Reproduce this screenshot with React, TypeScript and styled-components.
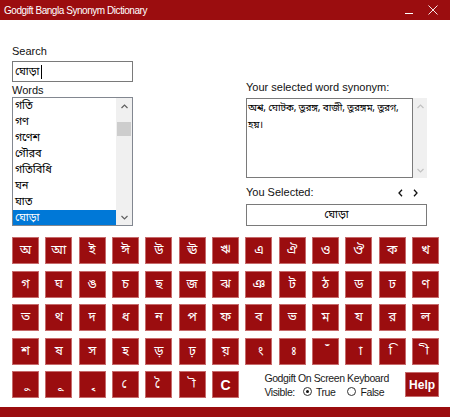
import styled, { createGlobalStyle } from "styled-components";

const RED = "#9b0d0f";
const BN = `"Noto Sans Bengali", "Noto Serif Bengali", "Lohit Bengali", "Vrinda", "FreeSerif", "FreeSans", sans-serif`;
const NBSP = "\u00a0";

const GlobalStyle = createGlobalStyle`
  html, body {
    margin: 0;
    padding: 0;
    background: #ffffff;
  }
  body {
    width: 450px;
    height: 417px;
    overflow: hidden;
    font-family: "Liberation Sans", Arial, sans-serif;
    color: #000;
  }
`;

const Window = styled.div`
  width: 450px;
  height: 417px;
  display: flex;
  flex-direction: column;
  background: #ffffff;
`;

const TitleBar = styled.div`
  height: 20px;
  flex-shrink: 0;
  background: ${RED};
  display: flex;
  align-items: center;
  padding-left: 4px;
  color: #ffffff;
`;

const Title = styled.span`
  font-size: 10px;
  letter-spacing: -0.45px;
  flex: 1;
`;

const WinControls = styled.div`
  display: flex;
  align-items: center;
  gap: 15px;
  padding-right: 12px;
`;

const Main = styled.div`
  flex: 1;
  display: flex;
  flex-direction: column;
  padding: 0 11px 0 12px;
`;

const TopArea = styled.div`
  height: 217px;
  display: flex;
  justify-content: space-between;
  padding-right: 12px;
`;

const LeftColumn = styled.div`
  width: 121px;
  display: flex;
  flex-direction: column;
  padding-top: 25px;
`;

const RightColumn = styled.div`
  width: 181px;
  display: flex;
  flex-direction: column;
  padding-top: 61px;
`;

const Label = styled.div<{ $top?: number }>`
  font-size: 11px;
  line-height: 13px;
  height: 13px;
  margin-top: ${(p) => p.$top ?? 0}px;
  white-space: nowrap;
  color: #111;
`;

const SearchBox = styled.div`
  margin-top: 3px;
  height: 21px;
  box-sizing: border-box;
  border: 1px solid #7a7a7a;
  display: flex;
  align-items: center;
  padding-left: 2px;
  font-family: ${BN};
  font-size: 11px;
`;

const Caret = styled.span`
  display: inline-block;
  width: 1px;
  height: 14px;
  background: #000;
  margin-left: 1px;
`;

const ListBox = styled.div`
  height: 129px;
  box-sizing: border-box;
  border: 1px solid #828790;
  display: flex;
  overflow: hidden;
`;

const ListItems = styled.div`
  flex: 1;
  display: flex;
  flex-direction: column;
`;

const ListItem = styled.div<{ $selected?: boolean }>`
  height: 16px;
  flex-shrink: 0;
  line-height: 16px;
  padding-left: 2px;
  font-family: ${BN};
  font-size: 11px;
  background: ${(p) => (p.$selected ? "#0078d7" : "transparent")};
  color: ${(p) => (p.$selected ? "#ffffff" : "#000000")};
`;

const ScrollBar = styled.div<{ $width: number; $disabled?: boolean }>`
  width: ${(p) => p.$width}px;
  flex-shrink: 0;
  background: #f0f0f0;
  display: flex;
  flex-direction: column;
  align-items: center;
  justify-content: space-between;
  color: ${(p) => (p.$disabled ? "#c2c2c2" : "#606060")};
`;

const ScrollArrow = styled.div`
  height: 16px;
  width: 100%;
  display: flex;
  align-items: center;
  justify-content: center;
`;

const ScrollTrack = styled.div`
  flex: 1;
  width: 100%;
  position: relative;
`;

const Thumb = styled.div`
  position: absolute;
  left: 1px;
  right: 1px;
  top: 8px;
  height: 14px;
  background: #cdcdcd;
`;

const SynonymWrap = styled.div`
  margin-top: 4px;
  height: 80px;
  display: flex;
`;

const SynonymText = styled.div`
  flex: 1;
  box-sizing: border-box;
  border: 1px solid #7a7a7a;
  padding: 1px 1px;
  font-family: ${BN};
  font-size: 10px;
  letter-spacing: -0.2px;
  line-height: 17px;
`;

const SelectedRow = styled.div`
  margin-top: 8px;
  display: flex;
  align-items: center;
  height: 13px;
`;

const NavArrows = styled.div`
  margin-left: auto;
  display: flex;
  gap: 10px;
  margin-right: 9px;
  color: #111;
`;

const SelectedBox = styled.div`
  margin-top: 5px;
  height: 22px;
  box-sizing: border-box;
  border: 1px solid #7a7a7a;
  display: flex;
  align-items: center;
  justify-content: center;
  font-family: ${BN};
  font-size: 11px;
`;

const Keyboard = styled.div`
  display: grid;
  grid-template-columns: repeat(13, 27px);
  grid-auto-rows: 27px;
  column-gap: 6.35px;
  row-gap: 6.5px;
`;

const Key = styled.button<{ $latin?: boolean }>`
  margin: 0;
  padding: 0;
  box-sizing: border-box;
  background: ${RED};
  border: 1px solid #c66a6b;
  color: #ffffff;
  font-family: ${(p) => (p.$latin ? `"Liberation Sans", Arial, sans-serif` : BN)};
  font-weight: ${(p) => (p.$latin ? "bold" : "normal")};
  font-size: ${(p) => (p.$latin ? "14px" : "13px")};
  display: flex;
  align-items: center;
  justify-content: center;
  cursor: pointer;
`;

const KeyboardFooter = styled.div`
  grid-column: 8 / -1;
  display: flex;
  align-items: center;
  padding-left: 19px;
`;

const FooterText = styled.div`
  flex: 1;
  display: flex;
  flex-direction: column;
  font-size: 10.5px;
  letter-spacing: -0.4px;
  line-height: 14px;
  color: #1a1a1a;
`;

const VisibleRow = styled.div`
  display: flex;
  align-items: center;
`;

const Radio = styled.span<{ $checked?: boolean }>`
  display: inline-block;
  width: 9px;
  height: 9px;
  box-sizing: border-box;
  border: 1px solid #333;
  border-radius: 50%;
  margin-left: ${(p) => (p.$checked ? 8 : 12)}px;
  margin-right: 4px;
  position: relative;
  &::after {
    content: "";
    display: ${(p) => (p.$checked ? "block" : "none")};
    position: absolute;
    left: 2px;
    top: 2px;
    width: 3px;
    height: 3px;
    border-radius: 50%;
    background: #111;
  }
`;

const HelpButton = styled.button`
  width: 34px;
  height: 25px;
  margin: 0;
  padding: 0;
  background: ${RED};
  border: 1px solid #c66a6b;
  color: #ffffff;
  font-family: "Liberation Sans", Arial, sans-serif;
  font-weight: bold;
  font-size: 12px;
  cursor: pointer;
`;

const BottomBar = styled.div`
  height: 10px;
  flex-shrink: 0;
  background: ${RED};
`;

// vowel signs and other marks get a no-break space as base so no dotted circle shows
const marks = ["ং", "ঃ", "ঁ", "া", "ি", "ী", "ু", "ূ", "ৃ", "ে", "ৈ", "ৗ"];

const rows = [
  ["অ", "আ", "ই", "ঈ", "উ", "ঊ", "ঋ", "এ", "ঐ", "ও", "ঔ", "ক", "খ"],
  ["গ", "ঘ", "ঙ", "চ", "ছ", "জ", "ঝ", "ঞ", "ট", "ঠ", "ড", "ঢ", "ণ"],
  ["ত", "থ", "দ", "ধ", "ন", "প", "ফ", "ব", "ভ", "ম", "য", "র", "ল"],
  ["শ", "ষ", "স", "হ", "ড়", "ঢ়", "য়", "ং", "ঃ", "ঁ", "া", "ি", "ী"],
  ["ু", "ূ", "ৃ", "ে", "ৈ", "ৗ"],
];

const words = ["গতি", "গণ", "গণেশ", "গৌরব", "গতিবিধি", "ঘন", "ঘাত", "ঘোড়া"];

function Chevron({ up }: { up?: boolean }) {
  return (
    <svg width="7" height="5" viewBox="0 0 7 5">
      <path
        d={up ? "M0.5 4 L3.5 1 L6.5 4" : "M0.5 1 L3.5 4 L6.5 1"}
        fill="none"
        stroke="currentColor"
        strokeWidth="1.2"
      />
    </svg>
  );
}

function NavArrow({ left }: { left?: boolean }) {
  return (
    <svg width="5" height="8" viewBox="0 0 5 8">
      <path
        d={left ? "M4 0.8 L1 4 L4 7.2" : "M1 0.8 L4 4 L1 7.2"}
        fill="none"
        stroke="currentColor"
        strokeWidth="1.3"
      />
    </svg>
  );
}

export default function App() {
  return (
    <>
      <GlobalStyle />
      <Window>
        <TitleBar>
          <Title>Godgift Bangla Synonym Dictionary</Title>
          <WinControls>
            <svg width="8" height="10" viewBox="0 0 8 10">
              <path d="M0 8.5 H8" stroke="#fff" strokeWidth="1" />
            </svg>
            <svg width="10" height="10" viewBox="0 0 10 10">
              <path d="M0.5 0.5 L9.5 9.5 M9.5 0.5 L0.5 9.5" stroke="#fff" strokeWidth="0.9" />
            </svg>
          </WinControls>
        </TitleBar>
        <Main>
          <TopArea>
            <LeftColumn>
              <Label>Search</Label>
              <SearchBox>
                ঘোড়া
                <Caret />
              </SearchBox>
              <Label $top={2}>Words</Label>
              <ListBox>
                <ListItems>
                  {words.map((w) => (
                    <ListItem key={w} $selected={w === "ঘোড়া"}>
                      {w}
                    </ListItem>
                  ))}
                </ListItems>
                <ScrollBar $width={16}>
                  <ScrollArrow>
                    <Chevron up />
                  </ScrollArrow>
                  <ScrollTrack>
                    <Thumb />
                  </ScrollTrack>
                  <ScrollArrow>
                    <Chevron />
                  </ScrollArrow>
                </ScrollBar>
              </ListBox>
            </LeftColumn>
            <RightColumn>
              <Label>Your selected word synonym:</Label>
              <SynonymWrap>
                <SynonymText>অশ্ব, ঘোটক, তুরঙ্গ, বাজী, তুরঙ্গম, তুরগ, হয়।</SynonymText>
                <ScrollBar $width={14} $disabled>
                  <ScrollArrow>
                    <Chevron up />
                  </ScrollArrow>
                  <ScrollArrow>
                    <Chevron />
                  </ScrollArrow>
                </ScrollBar>
              </SynonymWrap>
              <SelectedRow>
                <Label>You Selected:</Label>
                <NavArrows>
                  <NavArrow left />
                  <NavArrow />
                </NavArrows>
              </SelectedRow>
              <SelectedBox>ঘোড়া</SelectedBox>
            </RightColumn>
          </TopArea>
          <Keyboard>
            {rows.flat().map((k, i) => (
              <Key key={i}>{marks.includes(k) ? NBSP + k : k}</Key>
            ))}
            <Key $latin>C</Key>
            <KeyboardFooter>
              <FooterText>
                <span>Godgift On Screen Keyboard</span>
                <VisibleRow>
                  Visible:
                  <Radio $checked />
                  True
                  <Radio />
                  False
                </VisibleRow>
              </FooterText>
              <HelpButton>Help</HelpButton>
            </KeyboardFooter>
          </Keyboard>
        </Main>
        <BottomBar />
      </Window>
    </>
  );
}
